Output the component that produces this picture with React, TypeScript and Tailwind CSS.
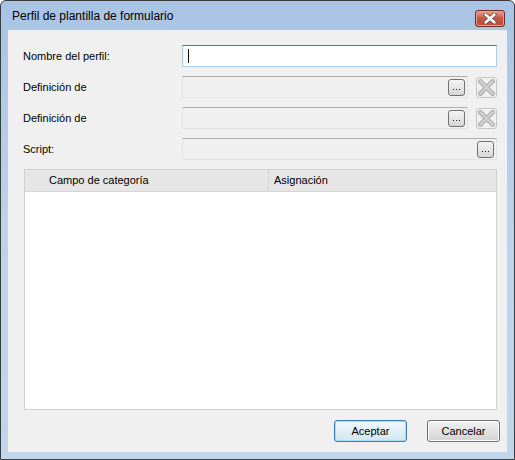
import * as React from "react"

const font = { fontFamily: '"Liberation Sans", Arial, sans-serif' }

function BrowseButton() {
  return (
    <div className="flex h-[17px] w-[17px] items-end justify-center gap-[2px] rounded-[3px] border border-[#707070] bg-gradient-to-b from-[#f4f4f4] to-[#d6d6d6] pb-[5px]">
      <div className="h-[1px] w-[1px] bg-[#222]" />
      <div className="h-[1px] w-[1px] bg-[#222]" />
      <div className="h-[1px] w-[1px] bg-[#222]" />
    </div>
  )
}

function ClearButton() {
  return (
    <div className="flex h-[21px] w-[21px] items-center justify-center rounded-[3px] border border-[#c4c4c4] bg-[#f0f0f0]">
      <svg width="17" height="17" viewBox="0 0 17 17">
        <path d="M2.5 2.5 L14.5 14.5 M14.5 2.5 L2.5 14.5" stroke="#a9a9a9" strokeWidth="4.5" strokeLinecap="square" />
        <path d="M2.5 2.5 L14.5 14.5 M14.5 2.5 L2.5 14.5" stroke="#cfcfcf" strokeWidth="2.5" strokeLinecap="square" />
      </svg>
    </div>
  )
}

function DisabledField({ withClear }: { withClear?: boolean }) {
  return (
    <div className="flex flex-1 items-center gap-[8px]">
      <div className="flex h-[22px] flex-1 items-center justify-end border border-[#e3e3e3] border-t-[#adadad] bg-[#f0f0f0] pr-[2px]">
        <BrowseButton />
      </div>
      {withClear && <ClearButton />}
    </div>
  )
}

function Row({ label, children }: { label: string; children: React.ReactNode }) {
  return (
    <div className="flex h-[22px] items-center">
      <div className="w-[159px] text-[11px] text-[#000]">{label}</div>
      {children}
    </div>
  )
}

function DialogButton({ label, primary }: { label: string; primary?: boolean }) {
  return (
    <div
      className={
        "flex h-[22px] w-[73px] items-center justify-center rounded-[3px] border text-[11px] text-[#000] " +
        (primary
          ? "border-[#3c7fb1] bg-gradient-to-b from-[#f2f8fc] to-[#d4e5f2] shadow-[inset_0_0_0_1px_#a6dbf7]"
          : "border-[#707070] bg-gradient-to-b from-[#f2f2f2] to-[#d3d3d3] shadow-[inset_0_0_0_1px_#fcfcfc]")
      }
    >
      {label}
    </div>
  )
}

export default function App() {
  return (
    <div style={font} className="h-[460px] w-[515px] bg-white">
      <div className="flex h-[460px] w-[515px] flex-col rounded-t-[6px] border border-[#3b3b3b] bg-gradient-to-b from-[#a9c4e3] via-[#bdd3eb] to-[#c1d6ed] px-[7px] pb-[7px]">
        {/* title bar */}
        <div className="flex h-[29px] items-start justify-between">
          <div className="pl-[4px] pt-[8px] text-[12px] leading-[14px] text-[#000]">Perfil de plantilla de formulario</div>
          <div className="mr-[2px] mt-[9px] flex h-[17px] w-[30px] items-center justify-center rounded-[3px] border border-[#6b2e2a] bg-gradient-to-b from-[#e8a493] via-[#c7533f] to-[#c24a37] shadow-[inset_0_0_0_1px_#e8a091]">
            <svg width="14" height="11" viewBox="0 0 14 11">
              <path d="M2.5 1.5 L11.5 9.5 M11.5 1.5 L2.5 9.5" stroke="#5a5a5a" strokeWidth="4.2" strokeLinecap="round" />
              <path d="M2.5 1.5 L11.5 9.5 M11.5 1.5 L2.5 9.5" stroke="#ffffff" strokeWidth="2.4" strokeLinecap="round" />
            </svg>
          </div>
        </div>

        {/* content */}
        <div className="flex flex-1 flex-col bg-[#f0f0f0] pl-[15px] pr-[10px] pt-[15px]">
          <div className="flex flex-col gap-[9px]">
            <Row label="Nombre del perfil:">
              <div className="flex h-[22px] flex-1 items-center border border-[#a9cbe5] border-t-[#3d7bad] bg-white pl-[5px]">
                <div className="h-[14px] w-[1px] bg-black" />
              </div>
            </Row>
            <Row label="Definición de">
              <DisabledField withClear />
            </Row>
            <Row label="Definición de">
              <DisabledField withClear />
            </Row>
            <Row label="Script:">
              <DisabledField />
            </Row>
          </div>

          <div className="ml-[1px] mt-[9px] flex h-[241px] flex-col border border-[#d0d0d0] bg-white">
            <div className="flex h-[22px] items-center border-b border-[#d5d5d5] bg-[#e6e6e6] text-[11px] text-[#000]">
              <div className="flex h-full w-[244px] items-center border-r border-[#d6d6d6] pl-[24px]">Campo de categoría</div>
              <div className="pl-[5px]">Asignación</div>
            </div>
            <div className="flex-1" />
          </div>

          <div className="-mr-[3px] mt-[10px] flex justify-end gap-[20px]">
            <DialogButton label="Aceptar" primary />
            <DialogButton label="Cancelar" />
          </div>
        </div>
      </div>
    </div>
  )
}
